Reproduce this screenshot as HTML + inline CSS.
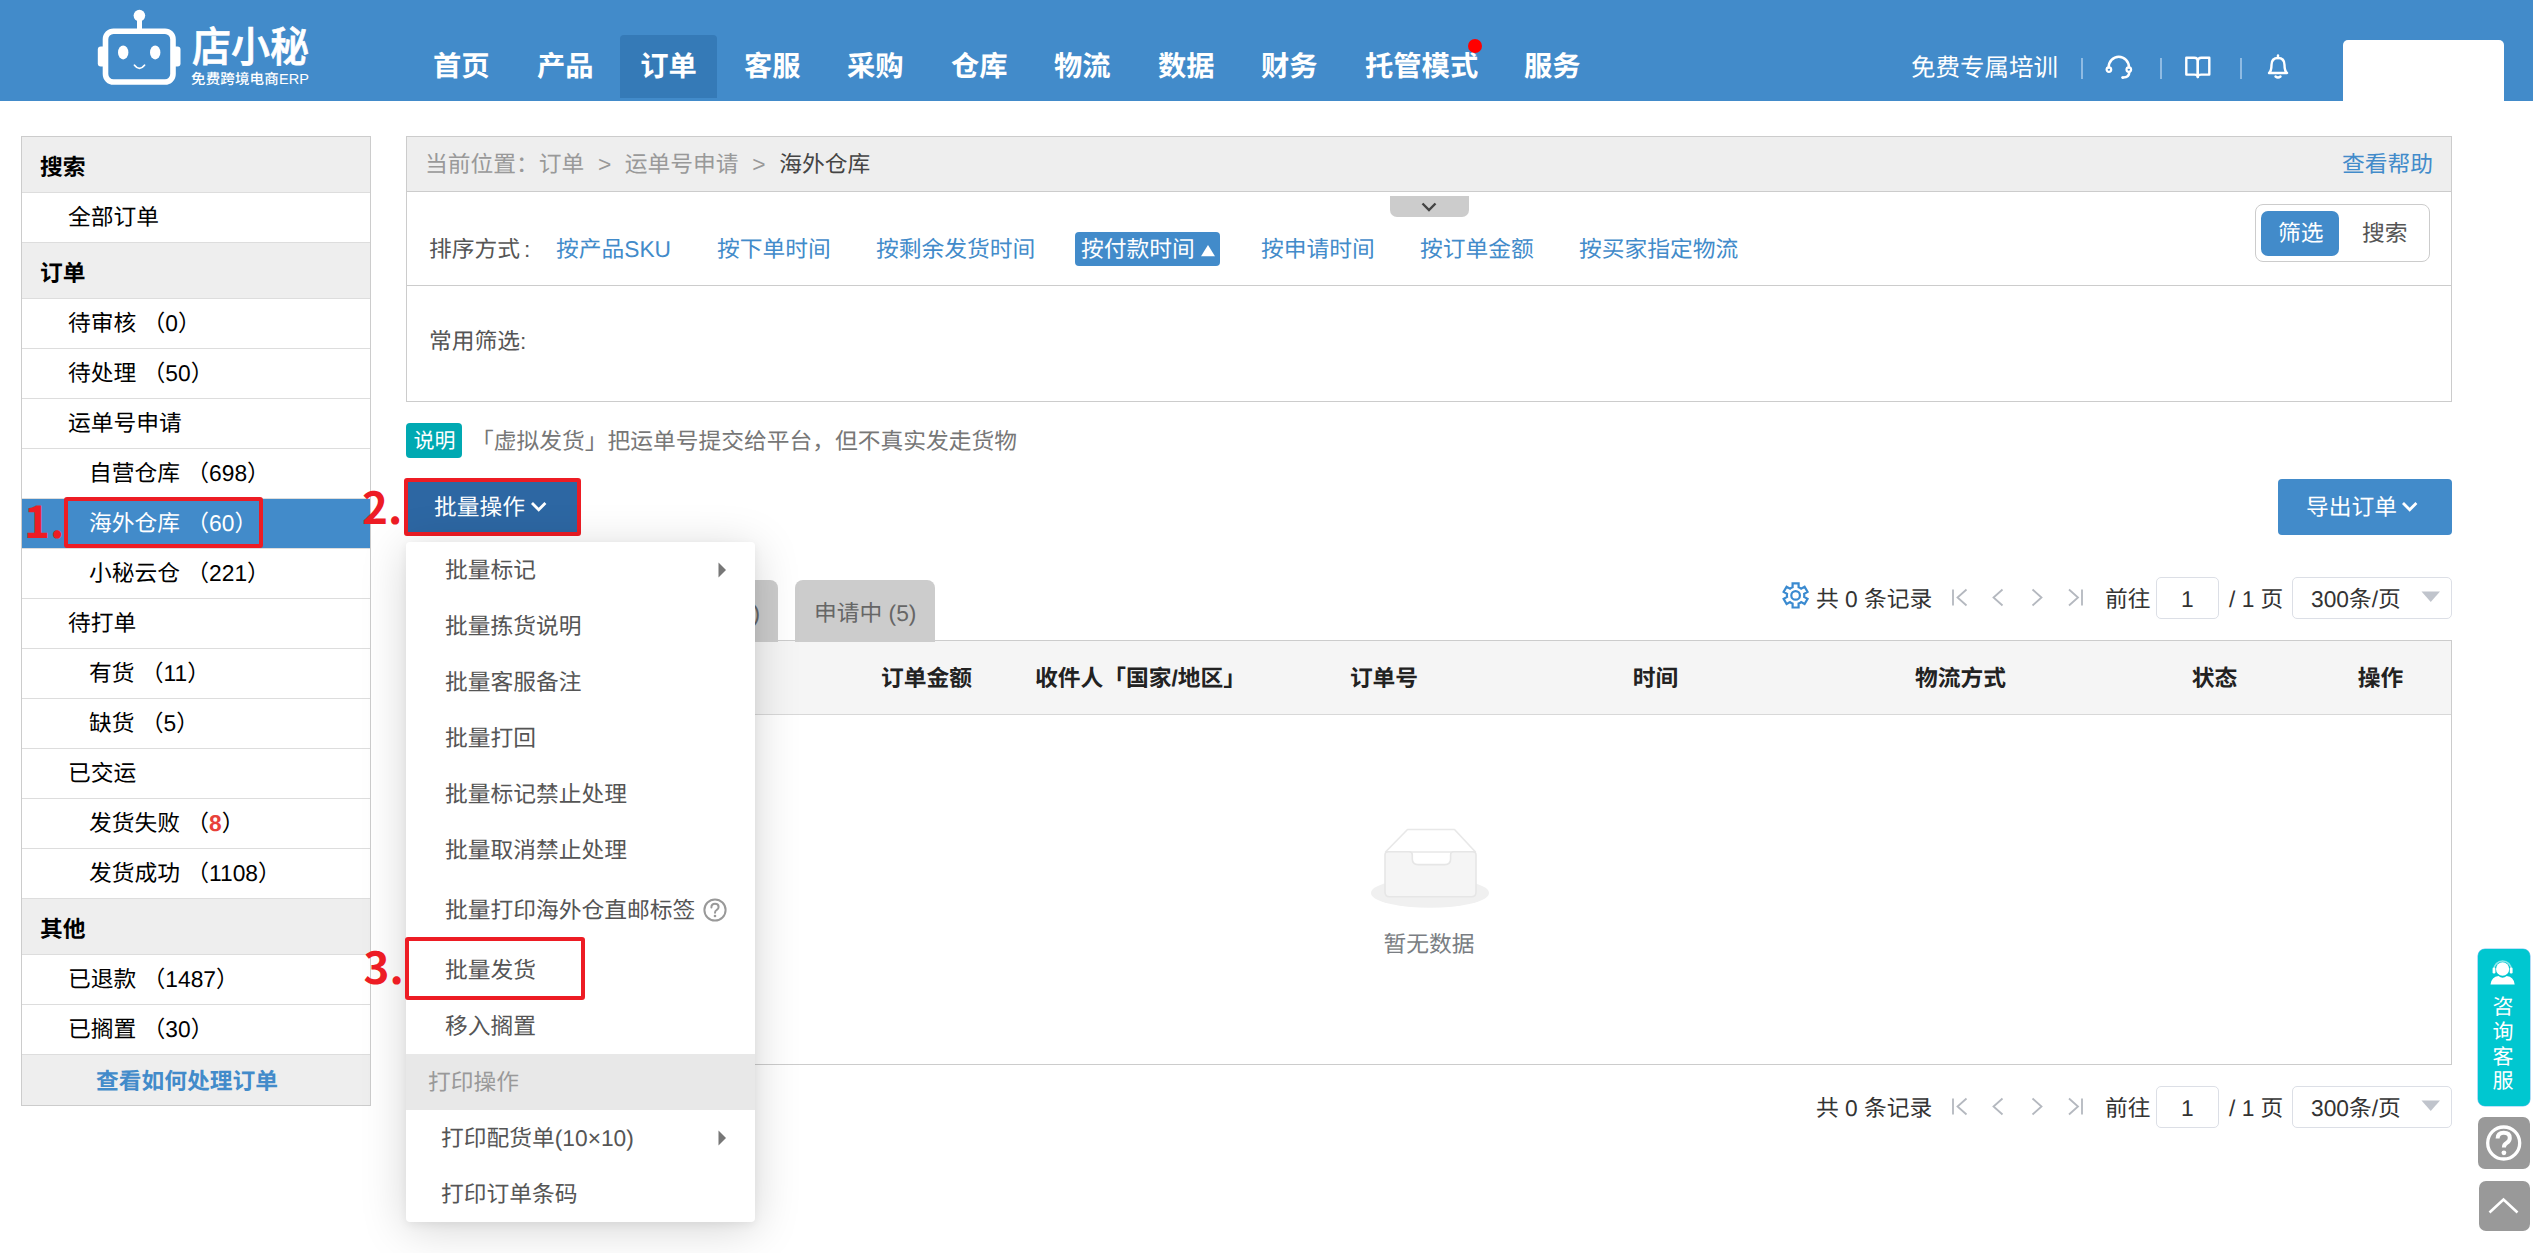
<!DOCTYPE html>
<html lang="zh-CN">
<head>
<meta charset="utf-8">
<title>店小秘 - 订单 - 海外仓库</title>
<style>
*{box-sizing:border-box;margin:0;padding:0}
html,body{width:2533px;height:1253px;overflow:hidden;background:#fff}
body{position:relative;text-rendering:geometricPrecision;font-family:"Liberation Sans","Noto Sans CJK SC",sans-serif;font-size:22.75px;color:#000;line-height:1}
.abs{position:absolute}
a{text-decoration:none;color:#428bca}
/* header */
#hdr{position:absolute;left:0;top:0;width:2533px;height:101px;background:#428bca}
.nav{position:absolute;top:35px;height:63px;line-height:63px;color:#fff;font-weight:bold;font-size:28.3px;white-space:nowrap}
.nav.on{background:#357ab7;border-radius:4px 4px 0 0;text-align:center}
.hr{position:absolute;color:#fff;white-space:nowrap}
.sep{position:absolute;top:58px;width:2px;height:21px;background:#8fbbe3}
/* sidebar */
#side{position:absolute;left:21px;top:136px;width:350px;border:1px solid #ccc;background:#fff}
#side div{height:50px;line-height:49px;padding-top:0px;border-top:1px solid #ddd;white-space:nowrap;font-size:22.75px;color:#000}
#side div:first-child{border-top:0;height:55px;line-height:52px;padding-top:4px}
#side .h{background:#eee;font-weight:bold;padding-left:18px;height:56px;line-height:52px;padding-top:4px}
#side .a{padding-left:46px}
#side .b{padding-left:67px}
#side .on{background:#428bca;color:#fff}
#side .f{background:#eee;text-align:center;color:#428bca;font-weight:bold;height:51px;padding-right:18px;padding-top:2px}
</style>
</head>
<body>
<div id="hdr">
  <svg class="abs" style="left:95px;top:5px" width="90" height="85" viewBox="95 5 90 85">
    <circle cx="139.4" cy="15.6" r="5.8" fill="#fff"/>
    <rect x="137" y="18" width="5" height="12" fill="#fff"/>
    <rect x="97.8" y="46.5" width="8" height="20" rx="3" fill="#fff"/>
    <rect x="172.5" y="46.5" width="8" height="20" rx="3" fill="#fff"/>
    <rect x="105.5" y="31.2" width="67.5" height="50.8" rx="8" fill="none" stroke="#fff" stroke-width="5.6"/>
    <ellipse cx="123.2" cy="52.4" rx="5.2" ry="7" fill="#fff"/>
    <ellipse cx="155.2" cy="52.4" rx="5.2" ry="7" fill="#fff"/>
    <path d="M134.5 65.2 Q139.4 71.5 144.5 65.2" fill="none" stroke="#fff" stroke-width="1.8" stroke-linecap="round"/>
  </svg>
  <div class="abs" style="left:192px;top:25px;font-size:39px;line-height:48px;color:#fff;font-weight:500;-webkit-text-stroke:0.7px #fff;letter-spacing:0px;white-space:nowrap;transform:scaleY(1.08);transform-origin:50% 50%">店小秘</div>
  <div class="abs" style="left:191px;top:71px;font-size:14.5px;line-height:18px;color:#fff;white-space:nowrap;letter-spacing:0.15px;font-weight:500">免费跨境电商ERP</div>

  <div class="nav" style="left:433px">首页</div>
  <div class="nav" style="left:537px">产品</div>
  <div class="nav on" style="left:620px;width:97px">订单</div>
  <div class="nav" style="left:744px">客服</div>
  <div class="nav" style="left:847px">采购</div>
  <div class="nav" style="left:951px">仓库</div>
  <div class="nav" style="left:1054px">物流</div>
  <div class="nav" style="left:1158px">数据</div>
  <div class="nav" style="left:1261px">财务</div>
  <div class="nav" style="left:1365px">托管模式</div>
  <div class="abs" style="left:1468px;top:39px;width:14px;height:14px;border-radius:50%;background:#f00"></div>
  <div class="nav" style="left:1524px">服务</div>

  <div class="hr" style="left:1911px;top:54px;font-size:24.5px;line-height:30px">免费专属培训</div>
  <div class="sep" style="left:2081px"></div>
  <div class="sep" style="left:2160px"></div>
  <div class="sep" style="left:2240px"></div>
  <!-- headset -->
  <svg class="abs" style="left:2104px;top:53px" width="30" height="28" viewBox="0 0 30 28" fill="none" stroke="#fff" stroke-width="2.5" stroke-linecap="round">
    <path d="M4.6 14.5 A10.2 10.8 0 0 1 25 14.5"/>
    <circle cx="4.9" cy="16.6" r="2.3" stroke-width="2.2"/>
    <circle cx="24.8" cy="16.6" r="2.3" stroke-width="2.2"/>
    <path d="M25.3 19 Q25.3 24.4 19.3 24.6"/>
    <circle cx="18.6" cy="24.6" r="1.4" fill="#fff" stroke="none"/>
  </svg>
  <!-- book -->
  <svg class="abs" style="left:2183px;top:54px" width="30" height="28" viewBox="0 0 30 28" fill="none" stroke="#fff" stroke-width="2.4" stroke-linejoin="round">
    <path d="M3.3 3.7 H11.3 Q14.8 3.7 14.8 7 V23 Q14.8 20.6 11.3 20.6 H3.3 Z"/>
    <path d="M26.3 3.7 H18.3 Q14.8 3.7 14.8 7 V23 Q14.8 20.6 18.3 20.6 H26.3 Z"/>
  </svg>
  <!-- bell -->
  <svg class="abs" style="left:2264px;top:52px" width="28" height="30" viewBox="0 0 28 30" fill="none" stroke="#fff" stroke-width="2.4" stroke-linejoin="round" stroke-linecap="round">
    <path d="M5 21 Q7.5 19 7.5 13 Q7.5 6 14 6 Q20.5 6 20.5 13 Q20.5 19 23 21 Z"/>
    <path d="M14 3.5 V6"/>
    <path d="M11.5 24.5 Q14 26.5 16.5 24.5"/>
  </svg>
  <div class="abs" style="left:2343px;top:40px;width:161px;height:61px;background:#fff;border-radius:5px 5px 0 0"></div>
</div>

<div id="side">
  <div class="h">搜索</div>
  <div class="a">全部订单</div>
  <div class="h">订单</div>
  <div class="a">待审核 （0）</div>
  <div class="a">待处理 （50）</div>
  <div class="a">运单号申请</div>
  <div class="b">自营仓库 （698）</div>
  <div class="b on">海外仓库 （60）</div>
  <div class="b">小秘云仓 （221）</div>
  <div class="a">待打单</div>
  <div class="b">有货 （11）</div>
  <div class="b">缺货 （5）</div>
  <div class="a">已交运</div>
  <div class="b">发货失败 （<b style="color:#e8413a">8</b>）</div>
  <div class="b">发货成功 （1108）</div>
  <div class="h">其他</div>
  <div class="a">已退款 （1487）</div>
  <div class="a">已搁置 （30）</div>
  <div class="f">查看如何处理订单</div>
</div>


<style>
#bc{position:absolute;left:406px;top:136px;width:2046px;height:56px;background:#eee;border:1px solid #ccc;color:#999;line-height:55px;padding-left:20px;white-space:nowrap;word-spacing:0.5px}
#bc b{font-weight:normal;color:#444}
#panel{position:absolute;left:406px;top:191px;width:2046px;height:211px;border:1px solid #ccc;background:#fff}
.t{position:absolute;white-space:nowrap;line-height:30px;height:30px}
.lk{color:#428bca}
.g5{color:#555}
.pg{position:absolute;white-space:nowrap;line-height:30px;height:30px;color:#333;font-size:22.75px}
.box{position:absolute;height:42px;border:1px solid #dcdfe6;border-radius:5px;background:#fff}
#dd{position:absolute;left:406px;top:542px;width:349px;height:680px;background:#fff;border-radius:4px;box-shadow:0 7px 46px rgba(0,0,0,.17),0 3px 10px rgba(0,0,0,.06)}
#dd .i{position:absolute;left:39px;white-space:nowrap;color:#555;line-height:30px;height:30px}
.th{position:absolute;top:662.6px;line-height:30px;height:30px;font-weight:bold;color:#222;white-space:nowrap;transform:translateX(-50%)}
.red{position:absolute;color:#ed1c24;font-weight:bold;font-size:44px;line-height:45px;white-space:nowrap;font-family:"Noto Sans CJK SC","Liberation Sans",sans-serif}
.rb{position:absolute;border:4px solid #ed1c24;border-radius:3px}
</style>
<div id="bc"><span style="margin-left:-2px">当前位置：</span>订单 &nbsp;&gt;&nbsp; 运单号申请 &nbsp;&gt;&nbsp; <b>海外仓库</b></div>
<div class="t lk" style="left:2342px;top:149px">查看帮助</div>
<div id="panel"></div>
<div class="abs" style="left:407px;top:285px;width:2044px;height:1px;background:#ccc"></div>
<!-- collapse handle -->
<div class="abs" style="left:1390px;top:196px;width:79px;height:21px;background:#ccc;border-radius:0 0 7px 7px"></div>
<svg class="abs" style="left:1419px;top:200px" width="20" height="14" viewBox="0 0 20 14"><path d="M3.5 3.5 L10 10 L16.5 3.5" fill="none" stroke="#444" stroke-width="2.4"/></svg>
<div class="t g5" style="left:429px;top:234px">排序方式<span style="margin-left:4px">:</span></div>
<div class="t lk" style="left:556px;top:234px">按产品SKU</div>
<div class="t lk" style="left:717px;top:234px">按下单时间</div>
<div class="t lk" style="left:876px;top:234px">按剩余发货时间</div>
<div class="abs" style="left:1075px;top:232px;width:145px;height:34px;background:#428bca;border-radius:4px"></div>
<div class="t" style="left:1081px;top:234px;color:#fff">按付款时间</div>
<svg class="abs" style="left:1199px;top:243px" width="18" height="15" viewBox="0 0 18 15"><path d="M9 2 L16 13.3 H2 Z" fill="#fff"/></svg>
<div class="t lk" style="left:1261px;top:234px">按申请时间</div>
<div class="t lk" style="left:1420px;top:234px">按订单金额</div>
<div class="t lk" style="left:1579px;top:234px">按买家指定物流</div>
<!-- toggle -->
<div class="abs" style="left:2255px;top:204px;width:175px;height:58px;border:1px solid #ccc;border-radius:8px;background:#fff"></div>
<div class="abs" style="left:2261px;top:211px;width:78px;height:45px;background:#428bca;border-radius:7px"></div>
<div class="t" style="left:2278px;top:218px;color:#fff">筛选</div>
<div class="t g5" style="left:2362px;top:218px">搜索</div>
<div class="t g5" style="left:429px;top:326px">常用筛选:</div>

<!-- note -->
<div class="abs" style="left:406px;top:423px;width:56px;height:35px;background:#00a9b2;border-radius:4px"></div>
<div class="t" style="left:413.5px;top:427px;color:#fff;font-size:21px">说明</div>
<div class="t" style="left:471px;top:426px;color:#777">「虚拟发货」把运单号提交给平台，但不真实发走货物</div>

<!-- batch button -->
<div class="abs" style="left:406px;top:480px;width:172px;height:54px;background:#2d67a3;border-radius:3px"></div>
<div class="t" style="left:434px;top:492px;color:#fff">批量操作</div>
<svg class="abs" style="left:529px;top:499px" width="20" height="16" viewBox="0 0 20 16"><path d="M3 4 L9.7 10.8 L16.4 4" fill="none" stroke="#fff" stroke-width="2.8"/></svg>
<div class="rb" style="left:404px;top:478px;width:177px;height:58px"></div>
<div class="red" style="left:362px;top:483px">2.</div>

<!-- export -->
<div class="abs" style="left:2278px;top:479px;width:174px;height:56px;background:#428bca;border-radius:4px"></div>
<div class="t" style="left:2306px;top:492px;color:#fff">导出订单</div>
<svg class="abs" style="left:2400px;top:499px" width="20" height="16" viewBox="0 0 20 16"><path d="M3 4 L9.7 10.8 L16.4 4" fill="none" stroke="#fff" stroke-width="2.8"/></svg>

<!-- table -->
<div class="abs" style="left:406px;top:640px;width:2046px;height:425px;border:1px solid #ccc;background:#fff"></div>
<div class="abs" style="left:407px;top:641px;width:2044px;height:74px;background:#f5f5f5;border-bottom:1px solid #d8d8d8"></div>
<div class="th" style="left:926.5px">订单金额</div>
<div class="th" style="left:1140.5px">收件人「国家/地区」</div>
<div class="th" style="left:1384px">订单号</div>
<div class="th" style="left:1655.5px">时间</div>
<div class="th" style="left:1960.5px">物流方式</div>
<div class="th" style="left:2214.5px">状态</div>
<div class="th" style="left:2380.5px">操作</div>

<!-- tabs -->
<div class="abs" style="left:640px;top:580px;width:138px;height:62px;background:#ccc;border-radius:8px 8px 0 0"></div>
<div class="t" style="left:645px;top:598px;color:#666">未申请 (55)</div>
<div class="abs" style="left:795px;top:580px;width:140px;height:62px;background:#ccc;border-radius:8px 8px 0 0"></div>
<div class="t" style="left:814px;top:598px;color:#666">申请中 (5)</div>

<!-- empty -->
<svg class="abs" style="left:1365px;top:820px" width="130" height="95" viewBox="1365 820 130 95">
  <ellipse cx="1430" cy="893" rx="59" ry="14.8" fill="#f0f0f0"/>
  <path d="M1385.5 852 L1407.5 829.5 H1454.5 L1475.5 852 Z" fill="#fff" stroke="#e8e8e8" stroke-width="1.6" stroke-linejoin="round"/>
  <path d="M1385 855 Q1385 851.8 1388.5 851.8 H1409 Q1412.3 851.8 1412.3 855 V859 Q1412.3 864.6 1418 864.6 H1445 Q1450.6 864.6 1450.6 859 V855 Q1450.6 851.8 1454 851.8 H1472.5 Q1476 851.8 1476 855 V892 Q1476 896.7 1471.5 896.7 H1389.5 Q1385 896.7 1385 892 Z" fill="#f5f5f5" stroke="#e6e6e6" stroke-width="1.6"/>
</svg>
<div class="t" style="left:1383.5px;top:928.5px;color:#7a7e83">暂无数据</div>

<!-- pagination top -->
<svg class="abs" style="left:1780px;top:580px" width="32" height="32" viewBox="0 0 32 32" fill="none" stroke="#3a8ad0" stroke-width="2.2" stroke-linejoin="miter">
  <circle cx="15.6" cy="15.4" r="4.3"/>
  <path d="M12.60 7.23 L12.60 3.30 L18.60 3.30 L18.60 7.23 A8.70 8.70 0 0 1 21.17 8.72 L24.58 6.75 L27.58 11.95 L24.17 13.91 A8.70 8.70 0 0 1 24.17 16.89 L27.58 18.85 L24.58 24.05 L21.17 22.08 A8.70 8.70 0 0 1 18.60 23.57 L18.60 27.50 L12.60 27.50 L12.60 23.57 A8.70 8.70 0 0 1 10.03 22.08 L6.62 24.05 L3.62 18.85 L7.03 16.89 A8.70 8.70 0 0 1 7.03 13.91 L3.62 11.95 L6.62 6.75 L10.03 8.72 A8.70 8.70 0 0 1 12.60 7.23 Z"/>
</svg>
<div class="pg" style="left:1816px;top:583.8px">共 0 条记录</div>
<svg class="abs" style="left:1948px;top:586px" width="140" height="24" viewBox="1948 586 140 24" fill="none" stroke="#b4b8bf" stroke-width="1.8">
  <path d="M1953 589.5 V605.5 M1966.5 589.5 L1957.5 597.5 L1966.5 605.5"/>
  <path d="M2002.5 589.5 L1993.5 597.5 L2002.5 605.5"/>
  <path d="M2032.5 589.5 L2041.5 597.5 L2032.5 605.5"/>
  <path d="M2069 589.5 L2078 597.5 L2069 605.5 M2082 589.5 V605.5"/>
</svg>
<div class="pg" style="left:2105px;top:583.8px">前往</div>
<div class="box" style="left:2156px;top:577px;width:63px"></div>
<div class="pg" style="left:2181px;top:583.8px">1</div>
<div class="pg" style="left:2229px;top:583.8px">/ 1 页</div>
<div class="box" style="left:2292px;top:577px;width:160px"></div>
<div class="pg" style="left:2311px;top:583.8px">300条/页</div>
<svg class="abs" style="left:2420px;top:590px" width="22" height="14" viewBox="0 0 22 14"><path d="M1.5 1.5 H20 L10.75 12 Z" fill="#c0c4cc"/></svg>


<div class="pg" style="left:1816px;top:1092.8px">共 0 条记录</div>
<svg class="abs" style="left:1948px;top:1095px" width="140" height="24" viewBox="1948 586 140 24" fill="none" stroke="#b4b8bf" stroke-width="1.8">
  <path d="M1953 589.5 V605.5 M1966.5 589.5 L1957.5 597.5 L1966.5 605.5"/>
  <path d="M2002.5 589.5 L1993.5 597.5 L2002.5 605.5"/>
  <path d="M2032.5 589.5 L2041.5 597.5 L2032.5 605.5"/>
  <path d="M2069 589.5 L2078 597.5 L2069 605.5 M2082 589.5 V605.5"/>
</svg>
<div class="pg" style="left:2105px;top:1092.8px">前往</div>
<div class="box" style="left:2156px;top:1086px;width:63px"></div>
<div class="pg" style="left:2181px;top:1092.8px">1</div>
<div class="pg" style="left:2229px;top:1092.8px">/ 1 页</div>
<div class="box" style="left:2292px;top:1086px;width:160px"></div>
<div class="pg" style="left:2311px;top:1092.8px">300条/页</div>
<svg class="abs" style="left:2420px;top:1099px" width="22" height="14" viewBox="0 0 22 14"><path d="M1.5 1.5 H20 L10.75 12 Z" fill="#c0c4cc"/></svg>


<!-- dropdown -->
<div id="dd">
  <div class="i" style="top:13px">批量标记</div>
  <svg class="abs" style="left:311px;top:19px" width="10" height="18" viewBox="0 0 10 18"><path d="M1.5 1.5 L9 9 L1.5 16.5 Z" fill="#777"/></svg>
  <div class="i" style="top:69px">批量拣货说明</div>
  <div class="i" style="top:125px">批量客服备注</div>
  <div class="i" style="top:181px">批量打回</div>
  <div class="i" style="top:237px">批量标记禁止处理</div>
  <div class="i" style="top:293px">批量取消禁止处理</div>
  <div class="i" style="top:353px">批量打印海外仓直邮标签</div>
  <svg class="abs" style="left:296px;top:355px" width="26" height="26" viewBox="0 0 26 26" fill="none" stroke="#999" stroke-width="2"><circle cx="13" cy="13" r="10.6"/><path d="M9.4 10.4 Q9.4 6.8 13 6.8 Q16.6 6.8 16.6 10 Q16.6 12 14.6 13 Q13 13.9 13 15.8" stroke-linecap="round"/><circle cx="13" cy="19" r="1.3" fill="#999" stroke="none"/></svg>
  <div class="i" style="top:413px">批量发货</div>
  <div class="i" style="top:469px">移入搁置</div>
  <div class="abs" style="left:0;top:512px;width:349px;height:56px;background:#e8e8e8"></div>
  <div class="i" style="left:22px;top:525px;color:#999">打印操作</div>
  <div class="i" style="left:35px;top:581px">打印配货单(10×10)</div>
  <svg class="abs" style="left:311px;top:587px" width="10" height="18" viewBox="0 0 10 18"><path d="M1.5 1.5 L9 9 L1.5 16.5 Z" fill="#777"/></svg>
  <div class="i" style="left:35px;top:637px">打印订单条码</div>
</div>
<div class="rb" style="left:405px;top:937px;width:180px;height:63px"></div>
<div class="red" style="left:363.5px;top:943px">3.</div>
<div class="rb" style="left:64px;top:497px;width:199px;height:51px"></div>
<div class="red" style="left:24px;top:496.5px">1.</div>

<!-- floaters -->
<div class="abs" style="left:2478px;top:949px;width:52px;height:156.5px;background:#00c7d0;border-radius:7px;box-shadow:0 0 0 0.6px #7cc4f2"></div>
<svg class="abs" style="left:2488px;top:957px" width="30" height="30" viewBox="0 0 30 30" fill="#fff">
  <ellipse cx="14.6" cy="12" rx="6.6" ry="6.8"/>
  <path d="M2.5 27.5 Q3.5 19.5 10.5 19 Q14.6 22.5 18.7 19 Q25.7 19.5 26.7 27.5 Z"/>
  <path d="M5.8 13 A8.8 9 0 0 1 23.4 13" fill="none" stroke="#fff" stroke-opacity=".55" stroke-width="1.5"/>
  <rect x="4.6" y="10.5" width="2.8" height="6" rx="1.2"/><rect x="21.8" y="10.5" width="2.8" height="6" rx="1.2"/>
</svg>
<div class="abs" style="left:2492px;top:996px;width:22px;color:#fff;font-size:21px;line-height:24.8px;text-align:center">咨询客服</div>
<div class="abs" style="left:2478px;top:1117px;width:52px;height:52px;background:#999;border-radius:7px"></div>
<svg class="abs" style="left:2484px;top:1123px" width="40" height="40" viewBox="0 0 40 40" fill="none" stroke="#fff" stroke-width="3.3"><circle cx="19.7" cy="20" r="16"/><path d="M13.6 15.6 Q13.6 9.8 19.7 9.8 Q25.8 9.8 25.8 15 Q25.8 18.2 22.6 20 Q19.9 21.6 19.9 24.4" stroke-width="4" stroke-linecap="butt"/><circle cx="19.9" cy="29.8" r="2.4" fill="#fff" stroke="none"/></svg>
<div class="abs" style="left:2479px;top:1181px;width:51px;height:50px;background:#999;border-radius:7px"></div>
<svg class="abs" style="left:2486px;top:1194px" width="36" height="24" viewBox="0 0 36 24"><path d="M3.5 18.5 L17.5 5.5 L31.5 18.5" fill="none" stroke="#fff" stroke-width="2.6"/></svg>

</body>
</html>
